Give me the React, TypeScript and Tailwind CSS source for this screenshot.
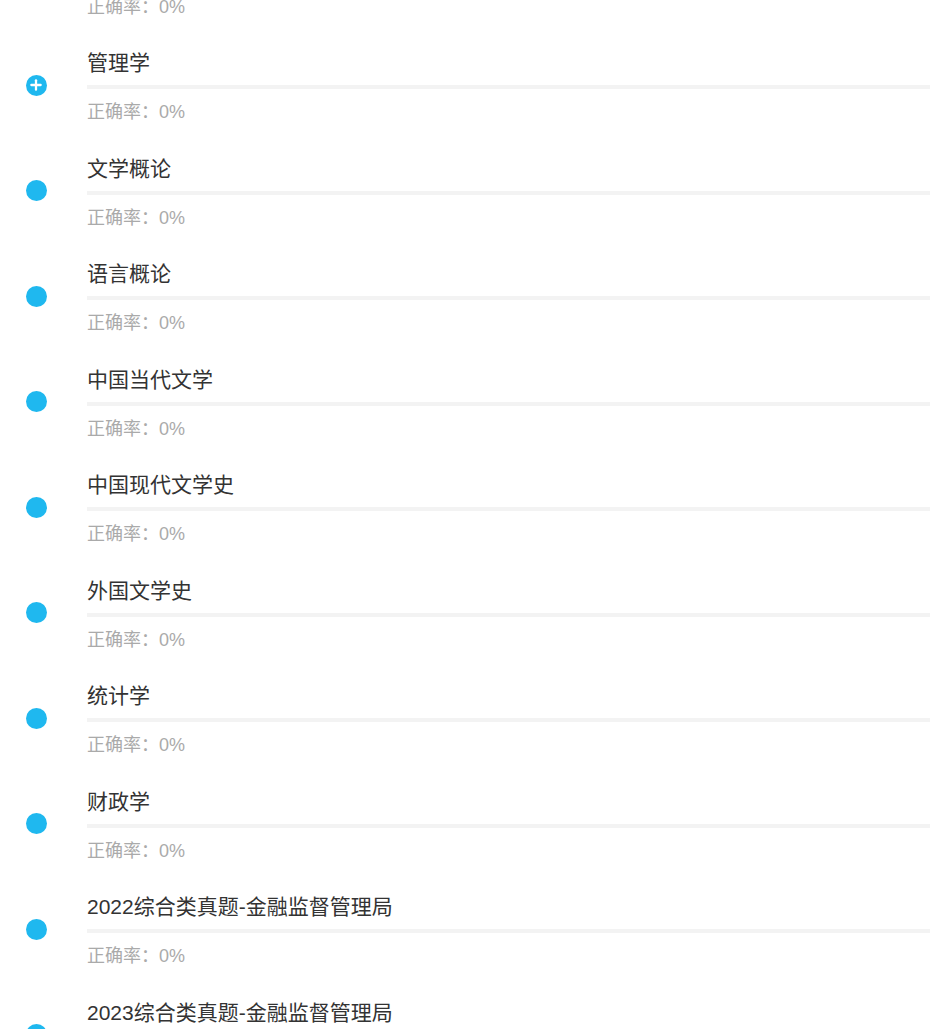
import { Plus } from "lucide-react";

const items = [
  "前一项",
  "管理学",
  "文学概论",
  "语言概论",
  "中国当代文学",
  "中国现代文学史",
  "外国文学史",
  "统计学",
  "财政学",
  "2022综合类真题-金融监督管理局",
  "2023综合类真题-金融监督管理局",
];

const Dot = ({ plus }: { plus?: boolean }) => (
  <div className="w-[21px] h-[21px] rounded-full bg-[#1fb8ef] flex items-center justify-center">
    {plus && <Plus size={16} strokeWidth={3.4} className="text-white" />}
  </div>
);

const Row = ({ title, plus }: { title: string; plus?: boolean }) => (
  <div className="flex h-[105.5px] shrink-0">
    <div className="w-[87px] shrink-0 pl-[25.5px] pt-[25.5px]">
      <Dot plus={plus} />
    </div>
    <div className="flex-1 flex flex-col">
      <div className="h-[28px] leading-[28px] text-[21px] text-[#333333] whitespace-nowrap">{title}</div>
      <div className="mt-[8px] h-[4px] bg-[#f3f3f3]" />
      <div className="mt-[11px] h-[24px] leading-[24px] text-[18px] text-[#aaaaaa]">正确率：0%</div>
    </div>
  </div>
);

export default function App() {
  return (
    <div
      className="w-[930px] h-[1029px] overflow-hidden bg-white"
      style={{ fontFamily: '"Liberation Sans", "Noto Sans CJK SC", sans-serif' }}
    >
      <div className="flex flex-col -mt-[56.5px]">
        {items.map((t, i) => (
          <Row key={i} title={t} plus={i === 1} />
        ))}
      </div>
    </div>
  );
}
